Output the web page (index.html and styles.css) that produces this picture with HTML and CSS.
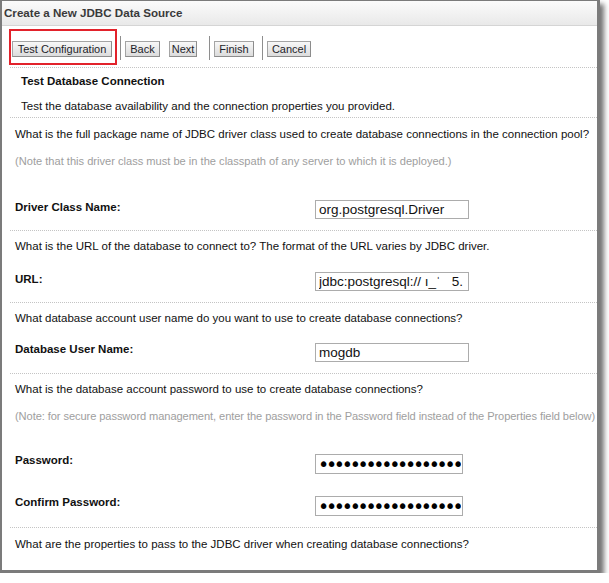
FILE: index.html
```html
<!DOCTYPE html>
<html>
<head>
<meta charset="utf-8">
<link rel="stylesheet" href="styles.css">
</head>
<body>
<div class="window">
  <div class="titlebar">Create a New JDBC Data Source</div>
  <div class="toolbar">
    <div class="highlight"><button class="btn btn-test">Test Configuration</button></div>
    <span class="sep sep-first"></span>
    <button class="btn btn-back">Back</button>
    <button class="btn btn-next">Next</button>
    <span class="sep sep-mid"></span>
    <button class="btn btn-finish">Finish</button>
    <span class="sep sep-last"></span>
    <button class="btn btn-cancel">Cancel</button>
  </div>

  <div class="section intro">
    <div class="heading">Test Database Connection</div>
    <div class="desc">Test the database availability and the connection properties you provided.</div>
  </div>

  <div class="section sec-driver">
    <div class="q">What is the full package name of JDBC driver class used to create database connections in the connection pool?</div>
    <div class="note">(Note that this driver class must be in the classpath of any server to which it is deployed.)</div>
    <div class="field field-driver">
      <label class="label">Driver Class Name:</label>
      <input class="input" type="text" value="org.postgresql.Driver">
    </div>
  </div>

  <div class="section sec-url">
    <div class="q">What is the URL of the database to connect to? The format of the URL varies by JDBC driver.</div>
    <div class="field field-url">
      <label class="label">URL:</label>
      <input class="input" type="text" value="jdbc:postgresql:// ı_ˈ   5.">
    </div>
  </div>

  <div class="section sec-user">
    <div class="q">What database account user name do you want to use to create database connections?</div>
    <div class="field field-user">
      <label class="label">Database User Name:</label>
      <input class="input" type="text" value="mogdb">
    </div>
  </div>

  <div class="section sec-pwd">
    <div class="q">What is the database account password to use to create database connections?</div>
    <div class="note note-wide">(Note: for secure password management, enter the password in the Password field instead of the Properties field below)</div>
    <div class="field field-pwd">
      <label class="label">Password:</label>
      <input class="input input-pwd" type="password" value="mogdbpassword123456789">
    </div>
    <div class="field field-confirm">
      <label class="label">Confirm Password:</label>
      <input class="input input-pwd" type="password" value="mogdbpassword123456789">
    </div>
  </div>

  <div class="section sec-props">
    <div class="q">What are the properties to pass to the JDBC driver when creating database connections?</div>
  </div>
</div>
</body>
</html>
```

FILE: styles.css
```css
html, body {
  margin: 0;
  padding: 0;
  background: #ffffff;
}

body {
  font-family: "Liberation Sans", Arial, sans-serif;
  font-size: 11.5px;
  color: #111111;
}

.window {
  box-sizing: border-box;
  width: 600px;
  height: 573px;
  border-style: solid;
  border-color: #7b7b7b;
  border-width: 1px 3px 3px 2px;
  background: #ffffff;
  box-shadow: 4px 4px 5px rgba(0, 0, 0, 0.55);
  overflow: hidden;
  white-space: nowrap;
}

.titlebar {
  height: 24px;
  line-height: 24px;
  padding-left: 2px;
  background: linear-gradient(#fbfbfb, #e9e9e9);
  border-bottom: 1px solid #d5d5d5;
  font-weight: bold;
  font-size: 11.6px;
  color: #3a3a3a;
}

.toolbar {
  display: flex;
  align-items: flex-start;
  height: 36px;
  padding: 3px 0 2px 0;
  margin-left: 8px;
  border-bottom: 1px dotted #c4c4c4;
}

.highlight {
  box-sizing: border-box;
  height: 36px;
  margin-left: -1px;
  padding: 10px 3px 0 1px;
  border: 2px solid #e2222b;
}

.btn {
  box-sizing: border-box;
  height: 16px;
  margin: 12px 0 0 0;
  padding: 0;
  font-family: "Liberation Sans", Arial, sans-serif;
  font-size: 11px;
  line-height: 14px;
  color: #1e1e2a;
  background: linear-gradient(#f8f8f8, #dcdcdc);
  border: 1px solid #a4a4a4;
  border-bottom-color: #8c8c8c;
  border-right-color: #8c8c8c;
  border-radius: 0;
  text-align: center;
}

.highlight .btn {
  margin-top: 0;
}

.btn-test { width: 100px; }
.btn-back { width: 35px; margin-left: 4px; }
.btn-next { width: 28px; margin-left: 9px; }
.btn-finish { width: 40px; margin-left: 4px; }
.btn-cancel { width: 44px; margin-left: 4px; }

.sep {
  width: 1px;
  height: 24px;
  margin-top: 7px;
  background: #8e8e8e;
}

.sep-first { margin-left: 3px; }
.sep-mid { margin-left: 12px; }
.sep-last { margin-left: 8px; }

.section {
  margin-left: 8px;
  padding-left: 5px;
  border-bottom: 1px dotted #c4c4c4;
  line-height: 14px;
}

.intro {
  padding: 6px 0 4px 11px;
}

.heading {
  font-weight: bold;
}

.desc {
  margin-top: 11px;
}

.q {
  color: #111111;
}

.note {
  margin-top: 13px;
  color: #9e9e9e;
  font-size: 11.1px;
}

.note-wide {
  letter-spacing: -0.08px;
}

.field {
  display: flex;
  align-items: flex-start;
}

.label {
  width: 300px;
  flex: none;
  font-weight: bold;
  color: #111111;
}

.input {
  box-sizing: border-box;
  width: 154px;
  height: 19px;
  margin: 0;
  padding: 0 3px;
  border: 1px solid #acacac;
  border-radius: 0;
  outline: none;
  background: #ffffff;
  font-family: "Liberation Sans", Arial, sans-serif;
  font-size: 13.5px;
  color: #111111;
}

.input-pwd {
  width: 148px;
  height: 20px;
  padding: 0 1px 0 2px;
  font-family: "DejaVu Sans", sans-serif;
  font-size: 19px;
  letter-spacing: -3.3px;
  color: #000000;
}

.sec-driver { padding-top: 9px; padding-bottom: 11px; }
.field-driver { margin-top: 32px; }

.sec-url { padding-top: 8px; padding-bottom: 11px; }
.field-url { margin-top: 19px; }

.sec-user { padding-top: 8px; padding-bottom: 11px; }
.field-user { margin-top: 17px; }
.field-user .input { margin-top: 1px; }

.sec-pwd { padding-top: 8px; padding-bottom: 11px; }
.field-pwd { margin-top: 30px; }
.field-pwd .input { margin-top: 1px; }
.field-confirm { margin-top: 21px; }
.field-confirm .input { margin-top: 1px; }

.sec-props { padding-top: 9px; border-bottom: none; }
```
